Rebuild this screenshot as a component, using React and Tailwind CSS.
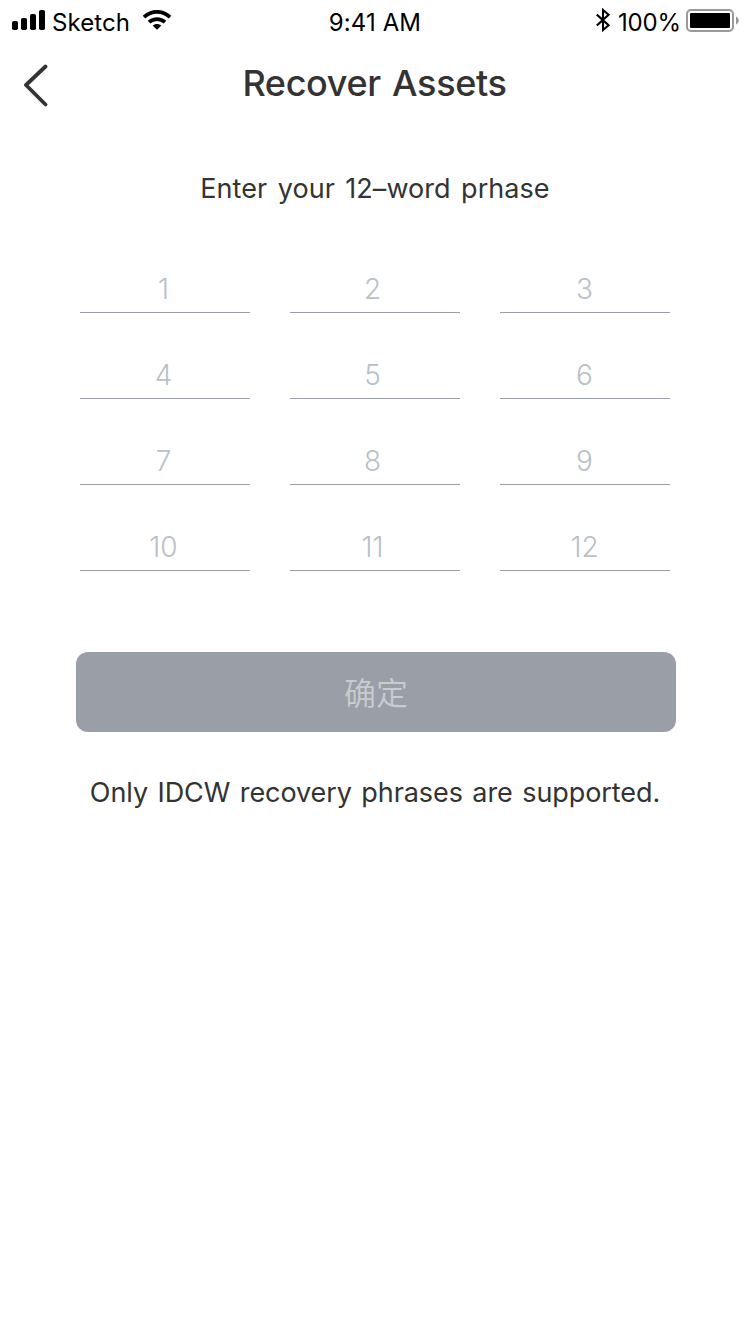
const rows = [
  ["1", "2", "3"],
  ["4", "5", "6"],
  ["7", "8", "9"],
  ["10", "11", "12"],
];

const columnInsets = ["pr-[3px]", "pr-[5px]", "pr-px"];

function StatusBar() {
  return (
    <div className="flex h-10 w-full items-start justify-between text-black">
      <div className="flex w-[250px] items-start pl-3">
        <svg className="mt-[10px] h-5 w-[33px] shrink-0" viewBox="0 0 33 20" fill="#000">
          <rect x="0" y="11" width="6" height="9" rx="1.8" />
          <rect x="9" y="8" width="6" height="12" rx="1.8" />
          <rect x="18" y="4" width="6" height="16" rx="1.8" />
          <rect x="27" y="0" width="6" height="20" rx="1.8" />
        </svg>
        <span className="ml-[7px] mt-[7px] w-[90px] whitespace-nowrap text-[24px] leading-8 tracking-[0.1px]">Sketch</span>
        <svg className="mt-[9px] h-[22px] w-[30px] shrink-0" viewBox="0 0 30 22" fill="none" stroke="#000" strokeWidth="3.7">
          <path d="M2 8.1C9.4 1.1 20.6 1.1 28 8.1" />
          <path d="M7 13.2C11.6 9 18.4 9 23 13.2" />
          <path d="M15 20.8L10.6 16.6C13.2 14.4 16.8 14.4 19.4 16.6Z" fill="#000" stroke="none" />
        </svg>
      </div>
      <span className="mt-[7px] w-[250px] text-center text-[24px] leading-8 tracking-[0.1px]">9:41 AM</span>
      <div className="flex w-[250px] items-start justify-end pr-[10px]">
        <svg className="mt-2 h-6 w-[15px] shrink-0" viewBox="0 0 15 24" fill="none" stroke="#000" strokeWidth="2.1">
          <path d="M0.8 6.6L12.6 17.2L7 22V2L12.6 6.8L0.8 17.6" />
        </svg>
        <span className="ml-[7px] mt-[7px] w-[68px] whitespace-nowrap text-[24px] leading-8 tracking-[-0.2px]">100%</span>
        <svg className="mt-[9px] h-[23px] w-[54px] shrink-0" viewBox="0 0 54 23">
          <rect x="1" y="1" width="46" height="21" rx="4" fill="none" stroke="#999" strokeWidth="2" />
          <rect x="4" y="4" width="40" height="15" rx="1" fill="#000" />
          <path d="M50 7.5C53.7 9 53.7 14 50 15.5Z" fill="#999" />
        </svg>
      </div>
    </div>
  );
}

export default function App() {
  return (
    <div className="flex h-[1334px] w-[750px] flex-col bg-white font-['Inter','Noto_Sans_CJK_SC',sans-serif] text-[#333]">
      <StatusBar />
      <header className="flex h-[88px] items-center">
        <svg className="ml-[22px] mt-[2px] h-[44px] w-[28px]" viewBox="0 0 28 44" fill="none" stroke="#333" strokeWidth="3.8" strokeLinecap="round" strokeLinejoin="round">
          <path d="M23.5 3.5L4 22L23.5 41.5" />
        </svg>
        <h1 className="mb-[2px] mr-[51px] flex-1 text-center text-[36px] font-medium leading-[50px] tracking-[-0.35px] [word-spacing:2px]">Recover Assets</h1>
      </header>
      <p className="mt-[41px] text-center text-[27px] leading-10 tracking-[0.05px] [word-spacing:2.8px]">Enter your 12–word prhase</p>
      <div className="ml-20 mt-[18px] flex w-[590px] flex-col">
        {rows.map((row) => (
          <div key={row[0]} className="flex h-[86px] gap-10">
            {row.map((n, column) => (
              <div key={n} className={`flex h-[86px] w-[170px] items-end justify-center border-b border-[#9a9fa8] pb-[3px] text-[28px] font-light leading-10 text-[#b9c0c7] ${columnInsets[column]}`}>
                {n}
              </div>
            ))}
          </div>
        ))}
      </div>
      <button className="ml-[76px] mt-[81px] h-20 w-[600px] rounded-xl bg-[#9a9ea6] pt-1 text-[32px] font-[350] leading-10 text-[#c8cbcf]">确定</button>
      <p className="mt-[41px] text-center text-[27px] leading-10 tracking-[-0.08px] [word-spacing:2px]">Only IDCW recovery phrases are supported.</p>
    </div>
  );
}
